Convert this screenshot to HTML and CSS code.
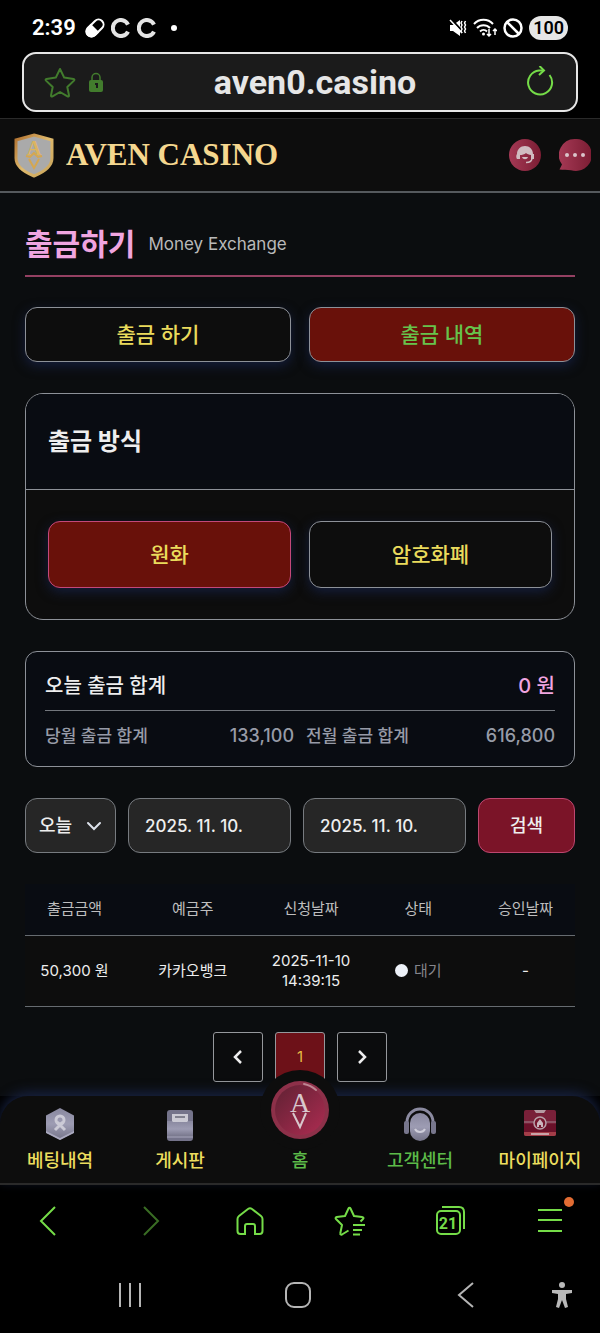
FILE: index.html
```html
<!DOCTYPE html>
<html lang="ko">

<head>
    <meta charset="utf-8">
    <meta name="viewport" content="width=device-width, initial-scale=1">
    <title>AVEN CASINO</title>
    <link rel="stylesheet" href="styles.css">
</head>

<body>
    <div class="statusBar">
        <div class="statusLeft">
            <span class="clock">2:39</span>
            <svg width="20" height="20" viewBox="0 0 20 20">
                <g transform="rotate(-45 10 10)">
                    <rect x="0" y="5" width="20" height="10" rx="5" fill="none" stroke="#fff" stroke-width="2" />
                    <path d="M10 4H5a6 6 0 0 0 0 12h5z" fill="#fff" />
                </g>
            </svg>
            <svg width="20" height="20" viewBox="0 0 20 20">
                <path d="M17 6.500A8 8 0 1 0 17 13.500" fill="none" stroke="#e4e4e4" stroke-width="4" />
            </svg>
            <svg width="20" height="20" viewBox="0 0 20 20">
                <path d="M17 6.500A8 8 0 1 0 17 13.500" fill="none" stroke="#e4e4e4" stroke-width="4" />
            </svg>
            <span class="statusDot"></span>
        </div>
        <div class="statusRight">
            <svg width="18" height="18" viewBox="0 0 18 18">
                <path d="M1 6h3l7-5v16l-7-5H1z" fill="#fff" />
                <path d="M2 0l15 16" stroke="#000" stroke-width="2" />
                <path d="M1 1l12 13" stroke="#fff" stroke-width="1.500" />
                <path d="M13 2l-1 2 1 2-1 2 1 2-1 2 1 2M16.500 2l-1 2 1 2-1 2 1 2-1 2 1 2" fill="none" stroke="#fff" stroke-width="1.500" />
            </svg>
            <svg width="24" height="20" viewBox="0 0 24 20">
                <path d="M1 6a13 13 0 0 1 19 0M4 10a9 9 0 0 1 13 0M7 13.500a5 5 0 0 1 7 0" fill="none" stroke="#fff" stroke-width="2" />
                <circle cx="10.500" cy="16" r="1.500" fill="#fff" />
                <path d="M16 11v7M14 16l2 2 2-2M22 17v-6M20 13l2-2 2 2" fill="none" stroke="#fff" stroke-width="1.500" />
            </svg>
            <svg width="20" height="20" viewBox="0 0 20 20" fill="none" stroke="#fff" stroke-width="2.500">
                <circle cx="10" cy="10" r="8.500" />
                <path d="M4 4l12 12" />
            </svg>
            <span class="battery">100</span>
        </div>
    </div>

    <form class="addressBar">
        <button type="button" class="iconBtn" aria-label="즐겨찾기">
            <svg width="32" height="32" viewBox="0 0 32 32">
                <path d="M16 3l4.200 8.600 9.300 1.300c1 .2 1.200 1 .5 1.700l-6.700 6.400 1.700 8.400c.1 1-.6 1.500-1.500 1L16 26l-7.500 4.400c-.9.500-1.600 0-1.500-1l1.700-8.400L2 14.600c-.7-.7-.5-1.500.5-1.700l9.300-1.300z" fill="none" stroke="#427c2d" stroke-width="2" stroke-linejoin="round" />
            </svg>
        </button>
        <svg width="16" height="20" viewBox="0 0 16 20">
            <path d="M4 9V5.500a4 4 0 0 1 8 0V9" fill="none" stroke="#427c2d" stroke-width="1.500" />
            <rect x="1" y="8" width="14" height="12" rx="2" fill="#427c2d" />
            <path d="M7 11h3v5H8v-3H7z" fill="#1b1b1b" />
        </svg>
        <input class="url" type="text" value="aven0.casino" aria-label="주소">
        <button type="button" class="iconBtn" aria-label="새로고침">
            <svg width="28" height="32" viewBox="0 0 28 32">
                <path d="M23.500 9A12 12 0 1 1 13 4.500h4" fill="none" stroke="#75dc48" stroke-width="2" />
                <path d="M13.500 0L18 4.500 13 9" fill="none" stroke="#75dc48" stroke-width="2" />
            </svg>
        </button>
    </form>

    <header class="siteHeader">
        <a class="brand" href="#">
            <svg width="40" height="46" viewBox="0 0 40 46">
                <defs>
                    <linearGradient id="gold" x1="0" y1="0" x2="1" y2="1">
                        <stop offset="0" stop-color="#b0702f" />
                        <stop offset="0.500" stop-color="#dfba6d" />
                        <stop offset="1" stop-color="#c7a35a" />
                    </linearGradient>
                </defs>
                <path d="M20 3l18 5v18c0 9-8 14-18 18C10 40 2 35 2 26V8z" fill="#aaa" stroke="url(#gold)" stroke-width="3" />
                <text class="shieldMark" x="20" y="23">A</text>
                <path d="M12 24l4 1 4-4 4 4 4-1M15 27l5 9 5-9" fill="none" stroke="#d5a750" stroke-width="2" />
            </svg>
            <span class="brandName">AVEN CASINO</span>
        </a>
        <nav class="headerLinks">
            <a href="#" aria-label="상담원">
                <svg width="32" height="32" viewBox="0 0 32 32">
                    <defs>
                        <linearGradient id="rose" x1="0" y1="0" x2="1" y2="0">
                            <stop offset="0" stop-color="#a53955" />
                            <stop offset="1" stop-color="#7b1d33" />
                        </linearGradient>
                    </defs>
                    <circle cx="16" cy="16" r="16" fill="url(#rose)" />
                    <path d="M8 15c0-4.500 3.500-8 8-8s8 3.500 8 8h1v5h-3v-4c-2-.2-4-1-5-2-1.500 1.500-4 2-6 2v4H8c-1-1-1-4 0-5z" fill="#d0bcc1" />
                    <path d="M23 19c0 3-2 4.500-6 4.500" fill="none" stroke="#d0bcc1" stroke-width="1.500" />
                    <path d="M13 18h6c-1 3-5 3-6 0z" fill="#d0bcc1" />
                </svg>
            </a>
            <a href="#" aria-label="채팅">
                <svg width="32" height="32" viewBox="0 0 32 32">
                    <path d="M16 0a16 16 0 1 1-4 31.200C8 31 4 31 .5 30.500L3 25.500A16 16 0 0 1 16 0z" fill="url(#rose)" />
                    <circle cx="8" cy="16" r="2" fill="#dac4ca" />
                    <circle cx="16" cy="16" r="2" fill="#dac4ca" />
                    <circle cx="24" cy="16" r="2" fill="#dac4ca" />
                </svg>
            </a>
        </nav>
    </header>

    <main>
        <div class="pageTitle">
            <h1>출금하기</h1>
            <span>Money Exchange</span>
        </div>

        <div class="tabs">
            <button type="button" class="tab">출금 하기</button>
            <button type="button" class="tab active">출금 내역</button>
        </div>

        <section class="methodCard">
            <h2>출금 방식</h2>
            <div class="methods">
                <button type="button" class="method selected">원화</button>
                <button type="button" class="method">암호화폐</button>
            </div>
        </section>

        <section class="summary">
            <div class="todayTotal">
                <span>오늘 출금 합계</span>
                <span class="won">0 원</span>
            </div>
            <div class="monthTotals">
                <div class="monthTotal"><span>당월 출금 합계</span><span class="amount">133,100</span></div>
                <div class="monthTotal"><span>전월 출금 합계</span><span class="amount">616,800</span></div>
            </div>
        </section>

        <form class="filter">
            <div class="selectWrap">
                <select aria-label="기간">
                    <option>오늘</option>
                </select>
                <svg width="16" height="10" viewBox="0 0 16 10">
                    <path d="M2 2l6 6 6-6" fill="none" stroke="#dce1ea" stroke-width="2" stroke-linecap="round" />
                </svg>
            </div>
            <input type="text" value="2025. 11. 10." aria-label="시작일">
            <input type="text" value="2025. 11. 10." aria-label="종료일">
            <button type="button">검색</button>
        </form>

        <table class="history">
            <thead>
                <tr>
                    <th>출금금액</th>
                    <th class="wide">예금주</th>
                    <th>신청날짜</th>
                    <th class="state">상태</th>
                    <th>승인날짜</th>
                </tr>
            </thead>
            <tbody>
                <tr>
                    <td>50,300 원</td>
                    <td>카카오뱅크</td>
                    <td>2025-11-10 14:39:15</td>
                    <td><span class="waiting">대기</span></td>
                    <td>-</td>
                </tr>
            </tbody>
        </table>

        <div class="pager">
            <button type="button" aria-label="이전">
                <svg width="10" height="16" viewBox="0 0 10 16">
                    <path d="M8 2L2 8l6 6" fill="none" stroke="#eee" stroke-width="2.500" />
                </svg>
            </button>
            <button type="button" class="current">1</button>
            <button type="button" aria-label="다음">
                <svg width="10" height="16" viewBox="0 0 10 16">
                    <path d="M2 2l6 6-6 6" fill="none" stroke="#eee" stroke-width="2.500" />
                </svg>
            </button>
        </div>
    </main>

    <nav class="bottomNav">
        <a href="#">
            <svg width="34" height="34" viewBox="0 0 34 34">
                <defs>
                    <linearGradient id="steel" x1="0" y1="0" x2="0" y2="1">
                        <stop offset="0" stop-color="#89889f" />
                        <stop offset="0.500" stop-color="#9d9cb3" />
                        <stop offset="1" stop-color="#747388" />
                    </linearGradient>
                </defs>
                <path d="M17 1l14 7.500v17L17 33 3 25.500v-17z" fill="url(#steel)" />
                <path d="M3 24l14 7 14-7v2l-14 7-14-7z" fill="#aaa9bf" />
                <circle cx="17" cy="13" r="4" fill="none" stroke="#cbcad6" stroke-width="3" />
                <path d="M20 15l-8 8M14 15l8 8" stroke="#cbcad6" stroke-width="3" />
            </svg>
            <span>베팅내역</span>
        </a>
        <a href="#">
            <svg width="34" height="34" viewBox="0 0 34 34">
                <rect x="4" y="3" width="26" height="31" rx="3" fill="#74738a" />
                <path d="M9 7h16v9H9z" fill="#cbcad4" />
                <path d="M12 10h10" stroke="#696879" stroke-width="1.500" />
                <path d="M4 14h5l1 1h14l1-1h5v16H4z" fill="url(#steel)" />
                <path d="M4 30h26" stroke="#a9a8bd" stroke-width="1" />
            </svg>
            <span>게시판</span>
        </a>
        <a href="#" class="on">
            <span class="homeCoin">
                <svg width="58" height="58" viewBox="0 0 58 58">
                    <defs>
                        <linearGradient id="coin" x1="0" y1="0" x2="1" y2="1">
                            <stop offset="0" stop-color="#5f2133" />
                            <stop offset="1" stop-color="#ad2c51" />
                        </linearGradient>
                    </defs>
                    <circle cx="29" cy="29" r="29" fill="#8d3049" />
                    <circle cx="29" cy="29" r="25" fill="url(#coin)" />
                    <path d="M33 3a26 26 0 0 1 12 6" fill="none" stroke="#bc8592" stroke-width="2" stroke-linecap="round" />
                    <text class="coinMark" x="29" y="31">A</text>
                    <path d="M22 32l7 14 6-14" fill="none" stroke="#d8c7cc" stroke-width="2" />
                </svg>
            </span>
            <span>홈</span>
        </a>
        <a href="#" class="on">
            <svg width="34" height="34" viewBox="0 0 34 34">
                <path d="M4 17v-2a13 13 0 0 1 26 0v2" fill="none" stroke="#8b8aa0" stroke-width="3" />
                <rect x="1" y="14" width="5" height="13" rx="2" fill="#77768c" />
                <rect x="28" y="14" width="5" height="13" rx="2" fill="#77768c" />
                <rect x="7" y="6" width="20" height="28" rx="10" fill="url(#steel)" />
                <path d="M12 22c2 4 8 4 10 0" fill="none" stroke="#cfceda" stroke-width="2" />
            </svg>
            <span>고객센터</span>
        </a>
        <a href="#">
            <svg width="34" height="34" viewBox="0 0 34 34">
                <rect x="1" y="3" width="32" height="26" rx="2" fill="#792039" />
                <path d="M1 17h32v8H1z" fill="#6a1029" />
                <path d="M1 25h32v2a2 2 0 0 1-2 2H3a2 2 0 0 1-2-2z" fill="#a33d48" />
                <path d="M11 3h12l-2 3h-8z" fill="#b69aa3" />
                <path d="M8 26h18v2H8z" fill="#c8a4a8" />
                <path d="M1 15h32" stroke="#a28490" stroke-width="1" />
                <circle cx="17" cy="16" r="6" fill="#76172e" stroke="#b8a0a9" stroke-width="1.500" />
                <path d="M17 12l3 4v4h-2v-2h-2v2h-2v-4z" fill="#cbb6be" />
            </svg>
            <span>마이페이지</span>
        </a>
    </nav>

    <div class="toolbar">
        <button type="button" class="iconBtn" aria-label="뒤로">
            <svg width="34" height="34" viewBox="0 0 34 34" fill="none" stroke="#75dc48" stroke-width="2">
                <path d="M22 3L8 17l14 14" />
            </svg>
        </button>
        <button type="button" class="iconBtn" aria-label="앞으로">
            <svg width="34" height="34" viewBox="0 0 34 34" fill="none" stroke="#3a6d24" stroke-width="2">
                <path d="M11 3l14 14-14 14" />
            </svg>
        </button>
        <button type="button" class="iconBtn" aria-label="홈">
            <svg width="34" height="34" viewBox="0 0 34 34" fill="none" stroke="#75dc48" stroke-width="2">
                <path d="M15 5L6 12c-1 .8-1.500 1.700-1.500 3v12c0 2 1 3 3 3H12v-8c0-1 .5-2 2-2h6c1.500 0 2 1 2 2v8h4.500c2 0 3-1 3-3V15c0-1.300-.5-2.200-1.500-3l-9-7c-1.500-1-2.500-1-4 0z" />
            </svg>
        </button>
        <button type="button" class="iconBtn" aria-label="북마크">
            <svg width="34" height="34" viewBox="0 0 34 34" fill="none" stroke="#75dc48" stroke-width="2" stroke-linejoin="round">
                <path d="M15.500 26.500L9 30.500c-1 .5-2 0-1.700-1.300L9 21l-6-6c-.8-.8-.4-1.800.7-2l8.300-1 3.500-7.500c.5-1 1.500-1 2 0L21 12l8 1c1.500.2 2 1.200 1 2l-2.500 2.500" />
                <path d="M20 21h12M20 26h9M20 30.500h7" />
            </svg>
        </button>
        <button type="button" class="iconBtn" aria-label="탭">
            <svg width="34" height="34" viewBox="0 0 34 34" fill="none" stroke="#75dc48" stroke-width="2">
                <rect x="4" y="7" width="23" height="23" rx="4" />
                <path d="M9 3h17c3.500 0 5 1.500 5 5v17" />
                <text class="tabCount" x="15" y="25">21</text>
            </svg>
        </button>
        <button type="button" class="iconBtn menuBtn" aria-label="메뉴">
            <svg width="34" height="34" viewBox="0 0 34 34" fill="none" stroke="#75dc48" stroke-width="2">
                <path d="M5 6h24M5 16h24M5 27h24" />
            </svg>
            <span class="badge"></span>
        </button>
    </div>

    <div class="systemNav">
        <button type="button" class="iconBtn" aria-label="최근 앱">
            <svg width="34" height="34" viewBox="0 0 34 34" stroke="#b5b5b5" stroke-width="2">
                <path d="M7 5v24M17 5v24M27 5v24" />
            </svg>
        </button>
        <button type="button" class="iconBtn" aria-label="홈 화면">
            <svg width="34" height="34" viewBox="0 0 34 34" fill="none" stroke="#b5b5b5" stroke-width="2">
                <rect x="5" y="5" width="24" height="24" rx="8" />
            </svg>
        </button>
        <button type="button" class="iconBtn" aria-label="이전 화면">
            <svg width="34" height="34" viewBox="0 0 34 34" fill="none" stroke="#b5b5b5" stroke-width="2">
                <path d="M24 5L10 17l14 12" />
            </svg>
        </button>
        <button type="button" class="iconBtn" aria-label="접근성">
            <svg width="24" height="30" viewBox="0 0 24 30" fill="#b9b9b9">
                <circle cx="12" cy="5" r="3" />
                <path d="M2 10h20v3l-6 1v5l2 8-3 1-3-8-3 8-3-1 2-8v-5l-6-1z" />
            </svg>
        </button>
    </div>
</body>

</html>
```

FILE: styles.css
```css
* {
    box-sizing: border-box;
}

body {
    margin: 0;
    background: #000;
    color: #eee;
    font-family: Inter, "Noto Sans CJK KR", sans-serif;
    font-size: 18px;
    line-height: 24px;
}

button,
input,
select {
    font-family: inherit;
    font-size: 18px;
    line-height: 24px;
    margin: 0;
}

svg {
    display: block;
    flex: none;
}

a {
    text-decoration: none;
    color: inherit;
}

.iconBtn {
    display: block;
    padding: 0;
    border: 0;
    background: none;
}

/* Phone status bar */

.statusBar {
    display: flex;
    justify-content: space-between;
    align-items: center;
    height: 52px;
    padding: 4px 32px 0;
    font-family: Roboto, sans-serif;
}

.statusLeft,
.statusRight {
    display: flex;
    align-items: center;
    gap: 6px;
}

.clock {
    margin-right: 3px;
    font-size: 22px;
    font-weight: 600;
    color: #fff;
}

.statusDot {
    width: 6px;
    height: 6px;
    margin-left: 8px;
    border-radius: 50%;
    background: #fff;
}

.battery {
    padding: 0 4px;
    border-radius: 12px;
    background: #e6e6e6;
    color: #000;
    font-size: 18px;
    font-weight: 600;
}

/* Browser address bar */

.addressBar {
    display: flex;
    align-items: center;
    height: 60px;
    margin: 0 22px 6px;
    padding: 0 22px 0 20px;
    border: 2px solid #e6e6e6;
    border-radius: 14px;
    background: #1b1b1b;
}

.addressBar .iconBtn + svg {
    margin-left: 12px;
}

.url {
    flex: 1;
    min-width: 0;
    padding: 0;
    border: 0;
    background: none;
    color: #e6e6e6;
    font-family: Roboto, sans-serif;
    font-size: 34px;
    font-weight: 700;
    line-height: 40px;
    text-align: center;
}

/* Site header */

.siteHeader {
    display: flex;
    justify-content: space-between;
    align-items: center;
    height: 75px;
    padding: 0 9px 0 14px;
    border-top: 1px solid #2a2a2a;
    border-bottom: 2px solid #55595d;
    background: #0d0d0d;
}

.brand,
.headerLinks {
    display: flex;
    align-items: center;
}

.brand {
    gap: 12px;
}

.headerLinks {
    gap: 18px;
}

.brandName {
    color: #f5d78f;
    font-family: "Liberation Serif", serif;
    font-size: 31px;
    font-weight: 700;
}

.shieldMark,
.coinMark {
    font-family: "Liberation Serif", serif;
    text-anchor: middle;
}

.shieldMark {
    fill: #dcb45f;
    font-size: 20px;
    font-weight: 700;
}

.coinMark {
    fill: #d8c7cc;
    font-size: 28px;
}

/* Withdrawal page */

main {
    padding: 20px 25px 14px;
    background: #0b0d0f;
}

.pageTitle {
    display: flex;
    align-items: center;
    gap: 13px;
    height: 64px;
    border-bottom: 2px solid #944062;
}

.pageTitle h1 {
    margin: 0;
    color: #f0a5e0;
    font-size: 30px;
    font-weight: 700;
    line-height: 40px;
}

.pageTitle span {
    color: #b9b9b9;
    font-size: 17px;
}

.tabs,
.methods {
    display: grid;
    grid-template-columns: 1fr 1fr;
    gap: 18px;
}

.tabs {
    margin-top: 30px;
}

.tab,
.method {
    height: 55px;
    border: 1px solid #8d9198;
    border-radius: 12px;
    background: #0d0d0d;
    box-shadow: 0 4px 12px #141d3a;
    color: #eadb5c;
    font-size: 21px;
    font-weight: 500;
}

.tab.active,
.method.selected {
    background: #69110a;
}

.tab.active {
    color: #67c34c;
}

.methodCard {
    margin-top: 31px;
    border: 1px solid #8d9198;
    border-radius: 18px;
    background: #0d0d0d;
    overflow: hidden;
}

.methodCard h2 {
    margin: 0;
    padding: 0 22px;
    border-bottom: 1px solid #8d9198;
    background: #090c12;
    color: #eee;
    font-size: 24px;
    font-weight: 700;
    line-height: 95px;
}

.methods {
    padding: 31px 22px;
}

.method {
    height: 67px;
}

.method.selected {
    border-color: #c4487a;
}

.summary {
    margin-top: 31px;
    padding: 10px 19px 6px;
    border: 1px solid #8d9198;
    border-radius: 12px;
    background: #090c12;
    font-weight: 500;
}

.todayTotal,
.monthTotal {
    display: flex;
    justify-content: space-between;
    align-items: center;
    height: 49px;
}

.todayTotal {
    border-bottom: 1px solid #73777d;
    font-size: 20px;
}

.won {
    color: #f0a5e0;
}

.monthTotals {
    display: grid;
    grid-template-columns: 1fr 1fr;
    gap: 12px;
    color: #979ba7;
    font-size: 17px;
}

.amount {
    font-size: 18px;
}

.filter {
    display: flex;
    gap: 12px;
    margin-top: 31px;
}

.filter select,
.filter input,
.filter button {
    height: 55px;
    border: 1px solid #777b80;
    border-radius: 12px;
    background: #262626;
    color: #eee;
    font-weight: 500;
}

.filter input {
    flex: 1;
    min-width: 0;
    padding: 0 16px;
    font-size: 17px;
}

.selectWrap {
    display: grid;
    align-items: center;
    justify-items: end;
    width: 91px;
}

.selectWrap select,
.selectWrap svg {
    grid-area: 1 / 1;
}

.selectWrap select {
    appearance: none;
    width: 100%;
    padding: 0 13px;
}

.selectWrap svg {
    margin-right: 14px;
    pointer-events: none;
}

.filter button {
    width: 97px;
    border-color: #bd4770;
    background: #7b1428;
}

.history {
    width: 100%;
    margin-top: 31px;
    border-collapse: collapse;
    table-layout: fixed;
    font-size: 15px;
    line-height: 20px;
    text-align: center;
}

.history th,
.history td {
    width: 18%;
    padding: 0;
    border-bottom: 1px solid #666b70;
}

.history th {
    height: 51px;
    background: #090c12;
    color: #bebebe;
    font-weight: 400;
}

.history .wide {
    width: 25%;
}

.history .state {
    width: 21%;
}

.history td {
    height: 71px;
    background: #0d0d0d;
}

.waiting {
    display: flex;
    align-items: center;
    justify-content: center;
    gap: 6px;
    color: #85858c;
}

.waiting::before {
    content: '';
    width: 13px;
    height: 13px;
    border-radius: 50%;
    background: #edf1f8;
}

.pager {
    display: flex;
    justify-content: center;
    gap: 12px;
    margin-top: 25px;
}

.pager button {
    display: flex;
    align-items: center;
    justify-content: center;
    width: 50px;
    height: 50px;
    padding: 0;
    border: 1px solid #96989c;
    border-radius: 3px;
    background: #0b0c0d;
}

.pager .current {
    background: #6d1118;
    color: #e6bd45;
    font-size: 15px;
}

/* Site bottom menu */

.bottomNav {
    position: relative;
    display: grid;
    grid-template-columns: repeat(5, 1fr);
    height: 89px;
    border-bottom: 2px solid #2a2a2a;
    border-radius: 28px 28px 0 0;
    background: #0d0d0d;
    box-shadow: 0 -4px 12px #17213f;
    color: #ecdd5e;
    font-weight: 500;
}

.bottomNav a {
    position: relative;
    display: flex;
    flex-direction: column;
    justify-content: flex-end;
    align-items: center;
    gap: 8px;
    padding-bottom: 10px;
    white-space: nowrap;
}

.bottomNav .on {
    color: #5cba49;
}

/* Round home button rises over the menu edge */

.homeCoin {
    position: absolute;
    top: -26px;
    padding: 11px;
    border-radius: 50%;
    background: #0d0d0d;
}

.bottomNav a > span:last-child {
    position: relative;
}

/* Browser toolbar */

.toolbar {
    display: grid;
    grid-template-columns: repeat(6, 1fr);
    justify-items: center;
    align-items: center;
    height: 72px;
}

.tabCount {
    fill: #75dc48;
    stroke: none;
    font-family: Roboto, sans-serif;
    font-size: 16px;
    font-weight: 700;
    text-anchor: middle;
}

.menuBtn {
    position: relative;
}

.badge {
    position: absolute;
    top: -7px;
    right: -7px;
    width: 10px;
    height: 10px;
    border-radius: 50%;
    background: #e26c33;
}

/* Phone navigation bar */

.systemNav {
    display: grid;
    grid-template-columns: 1fr 1fr 1fr 24px;
    justify-items: center;
    align-items: center;
    height: 77px;
    padding: 0 26px 0 46px;
}
```
